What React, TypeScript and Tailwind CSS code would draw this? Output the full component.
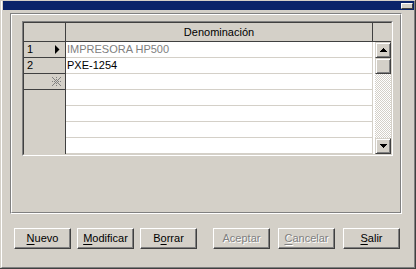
import React from "react";

function Btn({
  label,
  u,
  disabled,
  className,
}: {
  label: string;
  u: number;
  disabled?: boolean;
  className?: string;
}) {
  const chars = label.split("");
  return (
    <div
      className={
        "w-[57px] h-[21px] shrink-0 bg-[#d4d0c8] border border-t-white border-l-white border-b-[#404040] border-r-[#404040] shadow-[inset_-1px_-1px_#808080] flex items-center justify-center text-[11px] leading-none " +
        (disabled ? "text-[#808080] [text-shadow:1px_1px_0_#ffffff] " : "text-black ") +
        (className || "")
      }
    >
      <span>
        {chars.map((c, i) =>
          i === u ? (
            <span key={i} className="underline underline-offset-[2px]">
              {c}
            </span>
          ) : (
            <span key={i}>{c}</span>
          )
        )}
      </span>
    </div>
  );
}

function SbBtn({ children }: { children?: React.ReactNode }) {
  return (
    <div className="w-[16px] h-[16px] shrink-0 bg-[#d4d0c8] border border-t-[#d4d0c8] border-l-[#d4d0c8] border-b-[#404040] border-r-[#404040] shadow-[inset_1px_1px_#ffffff,inset_-1px_-1px_#808080] flex items-center justify-center">
      {children}
    </div>
  );
}

function Star() {
  const dots: [number, number][] = [
    [0, 0], [4, 0], [8, 0],
    [1, 1], [7, 1],
    [2, 2], [4, 2], [6, 2],
    [3, 3], [5, 3],
    [0, 4], [2, 4], [4, 4], [6, 4], [8, 4],
    [3, 5], [5, 5],
    [2, 6], [4, 6], [6, 6],
    [1, 7], [7, 7],
    [0, 8], [4, 8], [8, 8],
  ];
  return (
    <svg width="9" height="9" viewBox="0 0 9 9" shapeRendering="crispEdges">
      {dots.map(([x, y], i) => (
        <rect key={i} x={x} y={y} width="1" height="1" fill="#808080" />
      ))}
    </svg>
  );
}

export default function App() {
  const rows = ["IMPRESORA HP500", "PXE-1254", "", "", "", "", ""];
  return (
    <div className="w-[416px] h-[269px] bg-[#d4d0c8] border-r border-b border-[#404040] pl-px pt-px overflow-hidden font-['Liberation_Sans',Arial,sans-serif] text-[11px] text-black">
      <div className="h-full flex flex-col border-l border-l-white border-r border-r-[#808080] border-b border-b-[#808080]">
        {/* title bar */}
        <div className="ml-px h-[9px] shrink-0 bg-[#0a246a] relative">
          <div className="absolute top-[2px] right-[1px] w-[12px] h-[6px] bg-[#d4d0c8] border border-t-white border-l-white border-b-[#404040] border-r-[#404040]" />
        </div>

        {/* etched panel */}
        <div className="mt-[3px] ml-[8px] w-[392px] h-[201px] shrink-0 border border-t-[#808080] border-l-[#808080] border-b-white border-r-white">
          <div className="h-full border border-t-white border-l-white border-b-[#808080] border-r-[#808080]">
            {/* grid */}
            <div className="mt-[6px] ml-[10px] w-[371px] h-[135px] border border-t-[#808080] border-l-[#808080] border-r-white border-b-white">
              <div className="h-full flex flex-col border border-t-[#404040] border-l-[#404040] border-r-[#d4d0c8] border-b-[#d4d0c8] bg-[#d4d0c8]">
                {/* header */}
                <div className="flex h-[19px] shrink-0">
                  <div className="w-[42px] h-[19px] border-r border-b border-[#404040]" />
                  <div className="w-[307px] h-[19px] border-r border-b border-[#404040] flex items-center justify-center leading-none">
                    Denominación
                  </div>
                  <div className="w-[18px] h-[19px] border-b border-[#404040]" />
                </div>
                {/* body */}
                <div className="flex h-[112px]">
                  <div className="w-[42px] h-full border-r border-[#404040] flex flex-col">
                    <div className="h-[16px] border-b border-[#404040] flex items-center justify-between pl-[3px] pr-[5px] leading-none">
                      <span>1</span>
                      <svg width="5" height="9" viewBox="0 0 5 9">
                        <polygon points="0,0 4.5,4.5 0,9" fill="#000" />
                      </svg>
                    </div>
                    <div className="h-[16px] border-b border-[#404040] flex items-center pl-[3px] leading-none">
                      <span>2</span>
                    </div>
                    <div className="h-[16px] border-b border-[#404040] flex items-center justify-end pr-[4px]">
                      <Star />
                    </div>
                  </div>
                  <div className="w-[307px] h-full border-r border-[#d4d0c8] bg-white flex flex-col">
                    {rows.map((r, i) => (
                      <div
                        key={i}
                        className={
                          "h-[16px] shrink-0 border-b border-[#d4d0c8] flex items-center pl-[1px] leading-none whitespace-nowrap " +
                          (i === 0 ? "text-[#808080]" : "text-black")
                        }
                      >
                        {r}
                      </div>
                    ))}
                  </div>
                  <div className="w-[2px] h-full bg-white" />
                  <div className="w-[16px] h-full flex flex-col">
                    <SbBtn>
                      <svg width="7" height="4" viewBox="0 0 7 4" shapeRendering="crispEdges">
                        <polygon points="3.5,0 7,4 0,4" fill="#000" />
                      </svg>
                    </SbBtn>
                    <SbBtn />
                    <div className="flex-1 bg-[repeating-conic-gradient(#d4d0c8_0_25%,#ffffff_0_50%)] bg-[length:2px_2px]" />
                    <SbBtn>
                      <svg width="7" height="4" viewBox="0 0 7 4" shapeRendering="crispEdges">
                        <polygon points="0,0 7,0 3.5,4" fill="#000" />
                      </svg>
                    </SbBtn>
                  </div>
                </div>
              </div>
            </div>
          </div>
        </div>

        {/* buttons */}
        <div className="mt-[14px] flex h-[21px] shrink-0">
          <Btn label="Nuevo" u={0} className="ml-[12px]" />
          <Btn label="Modificar" u={0} className="ml-[6px]" />
          <Btn label="Borrar" u={1} className="ml-[6px]" />
          <Btn label="Aceptar" u={-1} disabled className="ml-[16px]" />
          <Btn label="Cancelar" u={0} disabled className="ml-[8px]" />
          <Btn label="Salir" u={0} className="ml-[8px]" />
        </div>
      </div>
    </div>
  );
}
